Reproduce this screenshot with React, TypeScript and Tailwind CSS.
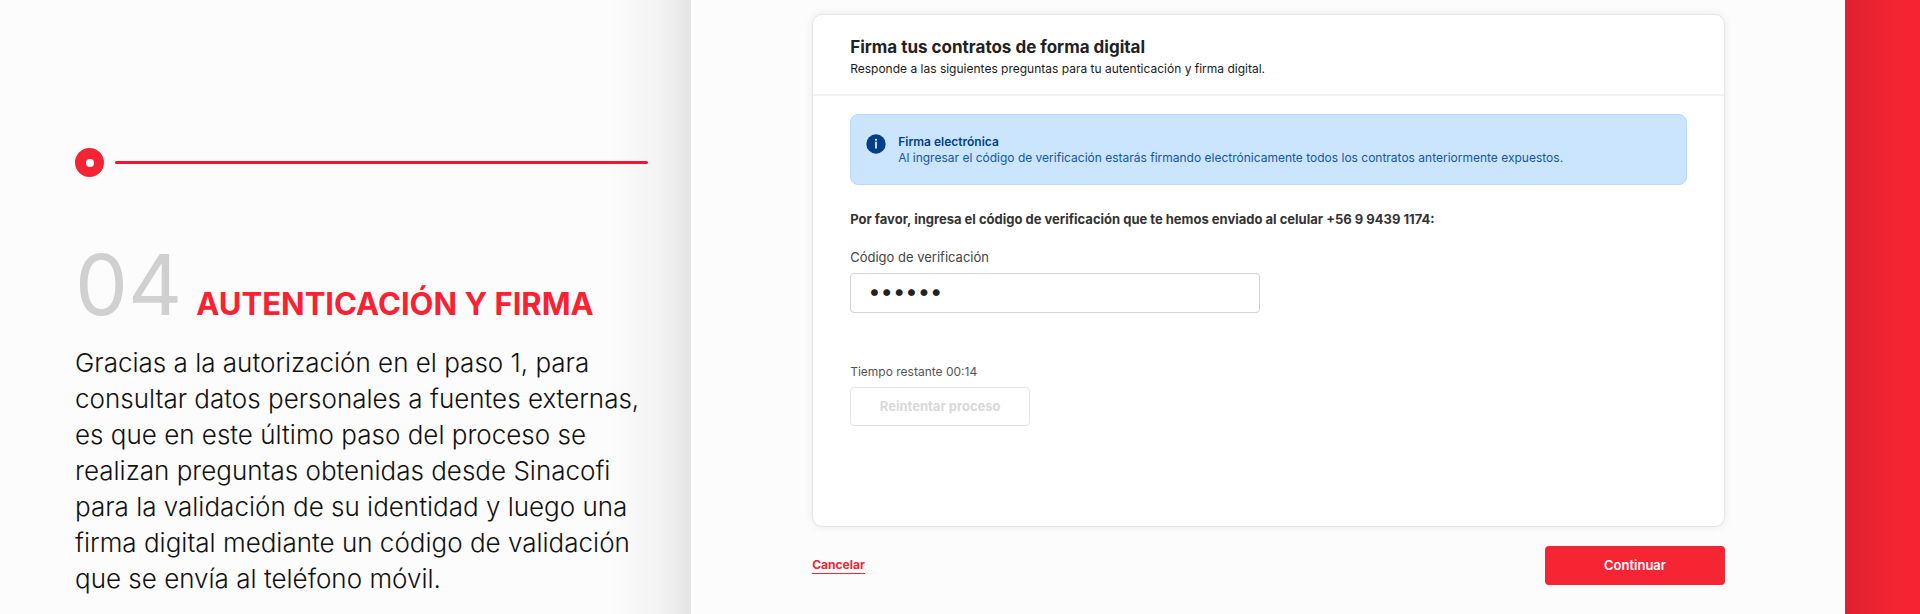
import { useState } from "react";

const STEP = {
  number: "04",
  title: "AUTENTICACIÓN Y FIRMA",
  lines: [
    "Gracias a la autorización en el paso 1, para",
    "consultar datos personales a fuentes externas,",
    "es que en este último paso del proceso se",
    "realizan preguntas obtenidas desde Sinacofi",
    "para la validación de su identidad y luego una",
    "firma digital mediante un código de validación",
    "que se envía al teléfono móvil.",
  ],
};

function StepPanel() {
  return (
    <section className="w-[36%] shrink-0 bg-linear-to-r from-[#fcfcfc] from-88% via-[#f4f4f4] via-95% to-[#e4e4e4] pl-[75px] pr-[43px] pt-[148px]">
      {/* Timeline marker */}
      <div className="flex items-center gap-[11px]">
        <span className="flex size-[29px] shrink-0 items-center justify-center rounded-full bg-[#f52333]">
          <span className="size-2 rounded-full bg-white" />
        </span>
        <span className="h-[3px] grow rounded-full bg-[#fa1230]" />
      </div>

      <h1 className="mt-[66px] flex items-baseline gap-3.5 whitespace-nowrap">
        <span className="text-[84px] leading-none font-normal text-[#d0d0d0]">
          {STEP.number}
        </span>
        <span className="text-[31px] leading-none font-bold text-[#f92132]">
          {STEP.title}
        </span>
      </h1>

      <p className="mt-[18px] text-[26px] leading-9 font-light whitespace-nowrap text-[#111]">
        {STEP.lines.map((line) => (
          <span key={line} className="block">
            {line}
          </span>
        ))}
      </p>
    </section>
  );
}

function InfoAlert() {
  return (
    <div
      role="note"
      className="flex min-h-[71px] items-start gap-3 rounded-lg border border-[#b8daff] bg-[#cce5ff] px-[15px] pt-[19px] pb-4"
    >
      <svg viewBox="0 0 20 20" className="size-5 shrink-0" aria-hidden="true">
        <circle cx="10" cy="10" r="9.7" fill="#003f87" />
        <circle cx="10" cy="5.8" r="1" fill="#fff" />
        <rect x="9.2" y="7.7" width="1.6" height="6.8" fill="#fff" />
      </svg>
      <div className="text-xs leading-4 text-[#1357a6]">
        <p className="font-semibold text-[#003f8c]">Firma electrónica</p>
        <p>
          Al ingresar el código de verificación estarás firmando
          electrónicamente todos los contratos anteriormente expuestos.
        </p>
      </div>
    </div>
  );
}

function SignatureCard() {
  const [code, setCode] = useState("123456");

  return (
    <div className="min-h-[513px] rounded-[10px] border border-[#e6e6e6] bg-white shadow-[0_0_8px_rgba(0,0,0,0.08)]">
      {/* Header */}
      <div className="border-b-2 border-[#f1f1f1] px-[37px] pt-5 pb-[15px]">
        <h2 className="text-[17px] leading-6 font-bold text-[#222]">
          Firma tus contratos de forma digital
        </h2>
        <p className="text-xs leading-5 text-[#1a1a1a]">
          Responde a las siguientes preguntas para tu autenticación y firma
          digital.
        </p>
      </div>

      {/* Body */}
      <div className="px-[37px] pt-[18px]">
        <InfoAlert />
        <p className="mt-6 text-[13px] leading-5 font-bold text-[#333]">
          Por favor, ingresa el código de verificación que te hemos enviado al
          celular +56 9 9439 1174:
        </p>
        <label
          htmlFor="code"
          className="mt-[18px] block text-[13px] leading-5 text-[#444]"
        >
          Código de verificación
        </label>
        <input
          id="code"
          type="password"
          value={code}
          onChange={(e) => setCode(e.target.value)}
          className="mt-[6px] block h-10 w-[49%] rounded border border-[#d3d3d3] bg-white px-[17px] pb-1 text-[22px] text-[#222] outline-none"
        />
        <p className="mt-[49px] text-xs leading-5 text-[#555]">
          Tiempo restante 00:14
        </p>
        <button
          type="button"
          disabled
          className="mt-[5px] h-[39px] w-[180px] rounded border border-[#e3e3e3] bg-white text-[13px] font-bold text-[#d9d9d9]"
        >
          Reintentar proceso
        </button>
      </div>
    </div>
  );
}

export default function App() {
  return (
    <main className="flex min-h-screen bg-[#fcfcfc] font-['Inter',sans-serif]">
      <StepPanel />

      <section className="min-w-0 grow pl-[121px] pr-[120px] pt-[14px]">
        <SignatureCard />
        <div className="mt-[19px] flex items-center justify-between">
          <a
            href="#"
            className="border-b border-[#f92132] text-xs leading-4 font-bold text-[#f92132]"
          >
            Cancelar
          </a>
          <button
            type="button"
            className="h-[39px] w-[180px] rounded bg-[#f52534] text-[13px] font-semibold text-white"
          >
            Continuar
          </button>
        </div>
      </section>

      {/* Brand strip */}
      <aside className="w-[75px] shrink-0 bg-linear-to-r from-[#df202e] to-[#f52433] to-70%" />
    </main>
  );
}
